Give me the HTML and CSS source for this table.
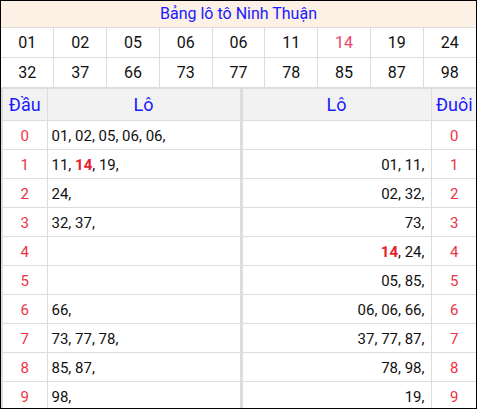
FILE: index.html
```html
<!DOCTYPE html>
<html lang="vi">
<head>
<meta charset="utf-8">
<link rel="stylesheet" href="styles.css">
</head>
<body>
<div class="box">
  <div class="title">Bảng lô tô Ninh Thuận</div>
  <table class="nums">
    <tr><td>01</td><td>02</td><td>05</td><td>06</td><td>06</td><td>11</td><td class="hot">14</td><td>19</td><td>24</td></tr>
    <tr><td>32</td><td>37</td><td>66</td><td>73</td><td>77</td><td>78</td><td>85</td><td>87</td><td>98</td></tr>
  </table>
  <table class="lo">
    <colgroup><col class="c-dau"><col class="c-lo1"><col class="c-lo2"><col class="c-duoi"></colgroup>
    <tr class="head"><th>Đầu</th><th>Lô</th><th class="sep">Lô</th><th>Đuôi</th></tr>
    <tr><td class="d">0</td><td class="l">01, 02, 05, 06, 06,</td><td class="r sep"></td><td class="d">0</td></tr>
    <tr><td class="d">1</td><td class="l">11, <b>14</b>, 19,</td><td class="r sep">01, 11,</td><td class="d">1</td></tr>
    <tr><td class="d">2</td><td class="l">24,</td><td class="r sep">02, 32,</td><td class="d">2</td></tr>
    <tr><td class="d">3</td><td class="l">32, 37,</td><td class="r sep">73,</td><td class="d">3</td></tr>
    <tr><td class="d">4</td><td class="l"></td><td class="r sep"><b>14</b>, 24,</td><td class="d">4</td></tr>
    <tr><td class="d">5</td><td class="l"></td><td class="r sep">05, 85,</td><td class="d">5</td></tr>
    <tr><td class="d">6</td><td class="l">66,</td><td class="r sep">06, 06, 66,</td><td class="d">6</td></tr>
    <tr><td class="d">7</td><td class="l">73, 77, 78,</td><td class="r sep">37, 77, 87,</td><td class="d">7</td></tr>
    <tr><td class="d">8</td><td class="l">85, 87,</td><td class="r sep">78, 98,</td><td class="d">8</td></tr>
    <tr><td class="d">9</td><td class="l">98,</td><td class="r sep">19,</td><td class="d">9</td></tr>
  </table>
</div>
</body>
</html>
```
FILE: styles.css
```css
html, body { margin: 0; padding: 0; background: #fff; }
body { font-family: Roboto, "Liberation Sans", sans-serif; color: #111; }
.box {
  width: 475px;
  height: 407px;
  border: 1px solid #000;
  overflow: hidden;
}
.title {
  height: 26px;
  line-height: 26px;
  background: #fdf0e4;
  border-bottom: 1px solid #ddd;
  text-align: center;
  color: #1a1aff;
  font-size: 16px;
}
table { border-collapse: collapse; width: 475px; table-layout: fixed; }
.nums td {
  height: 29px;
  padding: 0;
  border: 1px solid #ddd;
  text-align: center;
  font-size: 16px;
}
.nums tr:first-child td { border-top: 0; }
.nums td:first-child { border-left: 0; }
.nums td:last-child { border-right: 0; }
.nums tr:last-child td { border-bottom: 2px solid #ddd; }
.nums .hot { color: #ee4466; }
.c-dau { width: 45px; }
.c-lo1 { width: 194px; }
.c-lo2 { width: 190px; }
.c-duoi { width: 46px; }
.lo th, .lo td {
  border: 1px solid #ddd;
  padding: 0;
}
.lo tr td:first-child, .lo tr th:first-child { border-left: 2px solid #ddd; }
.lo tr td:last-child, .lo tr th:last-child { border-right: 0; }
.lo tr:last-child td { border-bottom: 0; }
.lo .head th {
  height: 31px;
  background: #f2f2f2;
  color: #1a1aff;
  font-weight: normal;
  font-size: 18px;
  border-top: 0;
}
.lo td { height: 29px; padding-top: 2px; padding-bottom: 0; box-sizing: border-box; font-size: 15px; }
.lo .sep { border-left: 3px solid #ddd; }
.lo .d { text-align: center; color: #ee3344; }
.lo .l { text-align: left; padding-left: 4px; }
.lo .r { text-align: right; padding-right: 6px; }
.lo b { color: #e8202e; }
```
